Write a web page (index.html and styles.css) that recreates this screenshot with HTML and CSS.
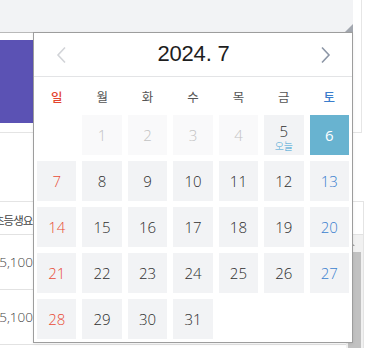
FILE: index.html
```html
<!DOCTYPE html>
<html lang="ko">
<head>
<meta charset="utf-8">
<link rel="stylesheet" href="styles.css">
</head>
<body>
<div class="page">
  <div class="card">
    <div class="memo"></div>
    <div class="banner"></div>
  </div>
  <div class="table">
    <div class="thead"><span class="th">초등생요금</span></div>
    <div class="tbody">
      <div class="rows">
        <div class="tr"><span class="td">15,100</span></div>
        <div class="tr"><span class="td">15,100</span></div>
      </div>
      <div class="scrollbar">
        <div class="sb-btn"><span class="sb-arrow"></span></div>
        <div class="sb-thumb"></div>
      </div>
    </div>
  </div>
</div>

<div class="picker">
  <div class="picker-head">
    <button class="nav prev" aria-label="이전 달">
      <svg width="12" height="18" viewBox="0 0 12 18"><polyline points="10,1.5 3,9 10,16.5" fill="none" stroke="#d2d4d8" stroke-width="1.6"/></svg>
    </button>
    <div class="title">2024. 7</div>
    <button class="nav next" aria-label="다음 달">
      <svg width="12" height="18" viewBox="0 0 12 18"><polyline points="2,1.5 9,9 2,16.5" fill="none" stroke="#8c96a6" stroke-width="1.6"/></svg>
    </button>
  </div>
  <div class="picker-body">
    <div class="weekdays">
      <span class="sun">일</span><span>월</span><span>화</span><span>수</span><span>목</span><span>금</span><span class="sat">토</span>
    </div>
    <div class="days">
      <span class="blank"></span>
      <span class="day off">1</span>
      <span class="day off">2</span>
      <span class="day off">3</span>
      <span class="day off">4</span>
      <span class="day today"><b>5</b><em>오늘</em></span>
      <span class="day selected">6</span>
      <span class="day sun">7</span>
      <span class="day">8</span>
      <span class="day">9</span>
      <span class="day">10</span>
      <span class="day">11</span>
      <span class="day">12</span>
      <span class="day sat">13</span>
      <span class="day sun">14</span>
      <span class="day">15</span>
      <span class="day">16</span>
      <span class="day">17</span>
      <span class="day">18</span>
      <span class="day">19</span>
      <span class="day sat">20</span>
      <span class="day sun">21</span>
      <span class="day">22</span>
      <span class="day">23</span>
      <span class="day">24</span>
      <span class="day">25</span>
      <span class="day">26</span>
      <span class="day sat">27</span>
      <span class="day sun">28</span>
      <span class="day">29</span>
      <span class="day">30</span>
      <span class="day">31</span>
    </div>
  </div>
</div>
</body>
</html>
```

FILE: styles.css
```css
* { box-sizing: border-box; }

html, body {
  margin: 0;
  padding: 0;
  background: #ffffff;
}

body {
  width: 381px;
  height: 348px;
  overflow: hidden;
  position: relative;
  font-family: "Open Sans", "Noto Sans CJK KR", sans-serif;
  color: #333;
}

/* ---------- background page ---------- */
.page {
  display: flex;
  flex-direction: column;
  height: 348px;
}

.card {
  width: 362px;
  height: 133px;
  flex: none;
  border-right: 1px solid #e6e6e6;
  border-bottom: 1px solid #e4e4e4;
  display: flex;
  flex-direction: column;
}

.memo {
  position: relative;
  width: 353px;
  height: 33px;
  background: #f2f3f5;
  border-bottom: 1px solid #b9b9b9;
}

.memo::after {
  content: "";
  position: absolute;
  right: 0;
  bottom: 0;
  width: 0;
  height: 0;
  border-left: 8px solid transparent;
  border-bottom: 8px solid #a3a8b0;
}

.banner {
  margin-top: 7px;
  width: 140px;
  height: 83px;
  background: #5b52b4;
}

.table {
  margin-top: 68px;
  margin-left: -10px;
  width: 374px;
  flex: 1;
  min-height: 0;
  display: flex;
  flex-direction: column;
  border-top: 1px solid #e4e4e4;
  border-right: 1px solid #e4e4e4;
}

.thead {
  height: 33px;
  flex: none;
  border-bottom: 1px solid #e2e2e2;
  padding-top: 10px;
  font-size: 11.5px;
  color: #444;
  line-height: 16px;
  white-space: nowrap;
  overflow: hidden;
}

.th {
  display: inline-block;
  margin-left: 4px;
  font-family: "Noto Sans CJK KR", sans-serif;
  letter-spacing: -1px;
}

.tbody {
  flex: 1;
  min-height: 0;
  display: flex;
}

.rows {
  flex: 1;
}

.tr {
  height: 55px;
  border-bottom: 1px solid #e2e2e2;
  display: flex;
  align-items: center;
}

.td {
  width: 43px;
  text-align: right;
  font-size: 13.5px;
  font-weight: 300;
  color: #444;
}

.scrollbar {
  width: 17px;
  background: #f1f1f1;
  display: flex;
  flex-direction: column;
  align-items: center;
}

.sb-btn {
  height: 17px;
  width: 17px;
  flex: none;
  display: flex;
  align-items: center;
  justify-content: center;
}

.sb-arrow {
  width: 0;
  height: 0;
  border-left: 4px solid transparent;
  border-right: 4px solid transparent;
  border-bottom: 4px solid #a3a3a3;
  margin-right: 7px;
}

.sb-thumb {
  width: 13px;
  flex: 1;
  background: #c1c1c1;
}

/* ---------- date picker ---------- */
.picker {
  position: absolute;
  left: 33px;
  top: 32px;
  width: 320px;
  height: 311px;
  background: #fff;
  border: 1px solid #9d9d9d;
  box-shadow: 0 1px 3px rgba(0, 0, 0, 0.08);
}

.picker-head {
  height: 44px;
  border-bottom: 1px solid #e3e4e6;
  display: flex;
  align-items: center;
  justify-content: space-between;
  padding: 0 20px 0 21px;
}

.nav {
  border: 0;
  background: none;
  padding: 0;
  width: 12px;
  height: 18px;
  display: flex;
  align-items: center;
  justify-content: center;
}

.title {
  font-family: "Liberation Sans", Arial, sans-serif;
  font-size: 22px;
  color: #1e1e1e;
  letter-spacing: -0.2px;
  margin-top: -2px;
}

.picker-body {
  padding: 0 3px 3px;
}

.weekdays {
  height: 38px;
  display: grid;
  grid-template-columns: repeat(7, 1fr);
  column-gap: 6px;
  align-items: center;
  text-align: center;
  font-family: "Noto Sans CJK KR", sans-serif;
  font-size: 12.5px;
  font-weight: 400;
  color: #555;
}

.weekdays .sun { color: #e4452e; font-weight: 500; }
.weekdays .sat { color: #3a7dcc; font-weight: 500; }

.days {
  display: grid;
  grid-template-columns: repeat(7, 1fr);
  grid-auto-rows: 40px;
  column-gap: 6px;
  row-gap: 6px;
}

.day {
  position: relative;
  background: #f2f3f5;
  display: flex;
  align-items: center;
  justify-content: center;
  font-size: 15px;
  font-weight: 300;
  color: #2e2e2e;
}

.day.sun { color: #e94b35; }
.day.sat { color: #3a7fcf; }

.day.off {
  background: #f9f9fa;
  color: #c3c3c3;
}

.day.today {
  flex-direction: column;
  justify-content: flex-start;
  padding-top: 8px;
}

.day.today b {
  font-weight: 300;
  line-height: 16px;
}

.day.today em {
  font-style: normal;
  font-family: "Noto Sans CJK KR", sans-serif;
  font-size: 10px;
  line-height: 11px;
  margin-top: 1px;
  color: #3d9fd2;
}

.day.selected {
  background: #68b3d0;
  color: #fff;
  font-weight: 500;
}
```
